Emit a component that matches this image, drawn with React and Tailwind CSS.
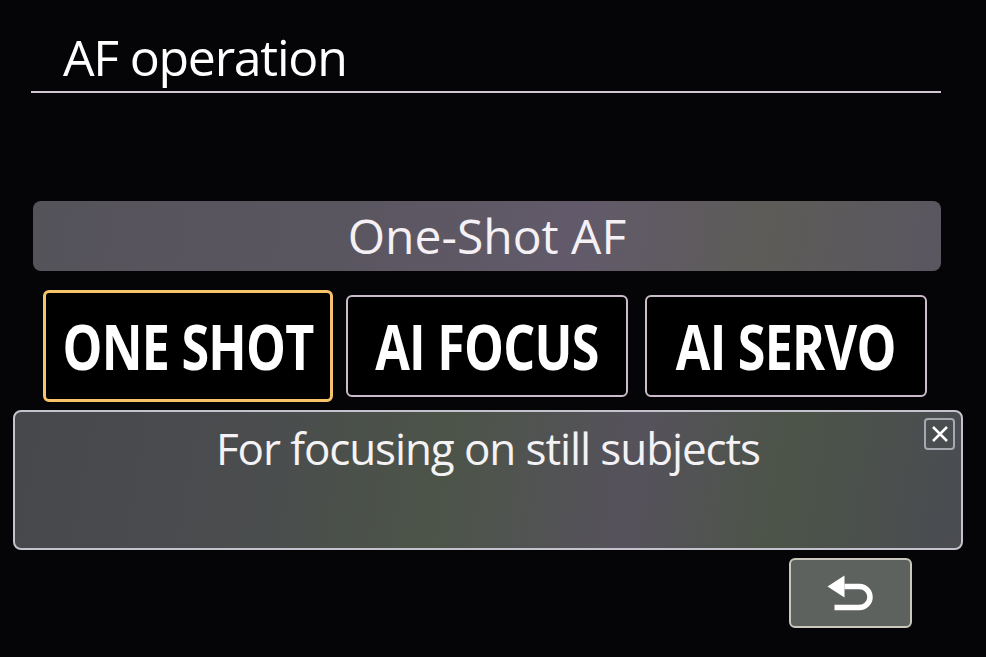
import { useState } from 'react'

const MODES = [
  { id: 'one', label: 'ONE SHOT', desc: 'For focusing on still subjects', name: 'One-Shot AF' },
  { id: 'focus', label: 'AI FOCUS', desc: 'Switches AF operation automatically', name: 'AI Focus AF' },
  { id: 'servo', label: 'AI SERVO', desc: 'For focusing on moving subjects', name: 'AI Servo AF' },
]

function ReturnIcon() {
  return (
    <svg width="48" height="38" viewBox="0 0 48 38" fill="none">
      <path d="M17.5 12.5 H32.5 A10.5 10.5 0 0 1 32.5 33.5 H7.5" stroke="white" strokeWidth="5.5" />
      <path d="M0.5 12.5 L17.5 1.5 L17.5 23.5 Z" fill="white" />
    </svg>
  )
}

export default function App() {
  const [mode, setMode] = useState('one')
  const current = MODES.find(m => m.id === mode)

  return (
    <div
      className="w-[986px] h-[657px] overflow-hidden bg-[#050507] text-white flex flex-col"
      style={{ fontFamily: '"Open Sans", "Noto Sans", sans-serif' }}
    >
      {/* Title */}
      <div className="mt-[32px] ml-[31px] w-[910px] border-b-2 border-[#cfc8d0] pb-[9px]">
        <h1 className="pl-[32px] text-[50px] leading-none tracking-[-0.025em]">AF operation</h1>
      </div>

      {/* Current mode name */}
      <div className="mt-[108px] ml-[33px] w-[908px] h-[70px] rounded-lg flex items-center justify-center bg-[linear-gradient(100deg,#55535a_0%,#5a5660_35%,#625a6a_60%,#5d5c58_80%,#5a5660_100%)]">
        <span className="text-[48px] leading-none text-[#f4f0f4]">{current.name}</span>
      </div>

      {/* Mode buttons */}
      <div className="mt-[19px] ml-[43px] flex items-center h-[112px]">
        {MODES.map((m, i) => {
          const active = m.id === mode
          return (
            <button
              key={m.id}
              onClick={() => setMode(m.id)}
              className={
                active
                  ? 'w-[290px] h-[112px] rounded-md border-[3px] border-[#f7c46a] bg-black flex items-center justify-center'
                  : i === 1
                  ? 'ml-[13px] w-[282px] h-[102px] rounded-md border-2 border-[#cbbccb] bg-black flex items-center justify-center'
                  : 'ml-[17px] w-[282px] h-[102px] rounded-md border-2 border-[#cbbccb] bg-black flex items-center justify-center'
              }
            >
              <span className="inline-block whitespace-nowrap scale-x-[0.81] text-[62px] font-bold leading-none tracking-[-0.015em] text-white">
                {m.label}
              </span>
            </button>
          )
        })}
      </div>

      {/* Description panel */}
      <div className="relative mt-[8px] ml-[13px] w-[950px] h-[140px] rounded-lg border-2 border-[#c4c2cc] bg-[linear-gradient(100deg,#46484c_0%,#4a4c4e_25%,#4c5448_45%,#56525c_65%,#4c5448_80%,#4a4c52_100%)]">
        <p className="pt-[14px] text-center text-[44px] leading-none tracking-[-0.025em] text-[#f4f2f4]">{current.desc}</p>
        <div className="absolute top-[6px] right-[6px] w-[31px] h-[32px] rounded-[4px] border-2 border-[#a8a8b0] flex items-center justify-center">
          <svg width="18" height="18" viewBox="0 0 18 18">
            <path d="M2 2 L16 16 M16 2 L2 16" stroke="white" strokeWidth="2.5" />
          </svg>
        </div>
      </div>

      {/* Return */}
      <div className="mt-[8px] ml-[789px] w-[123px] h-[70px] rounded-md border-2 border-[#cac8bc] bg-[#5e625e] flex items-center justify-center">
        <ReturnIcon />
      </div>
    </div>
  )
}
